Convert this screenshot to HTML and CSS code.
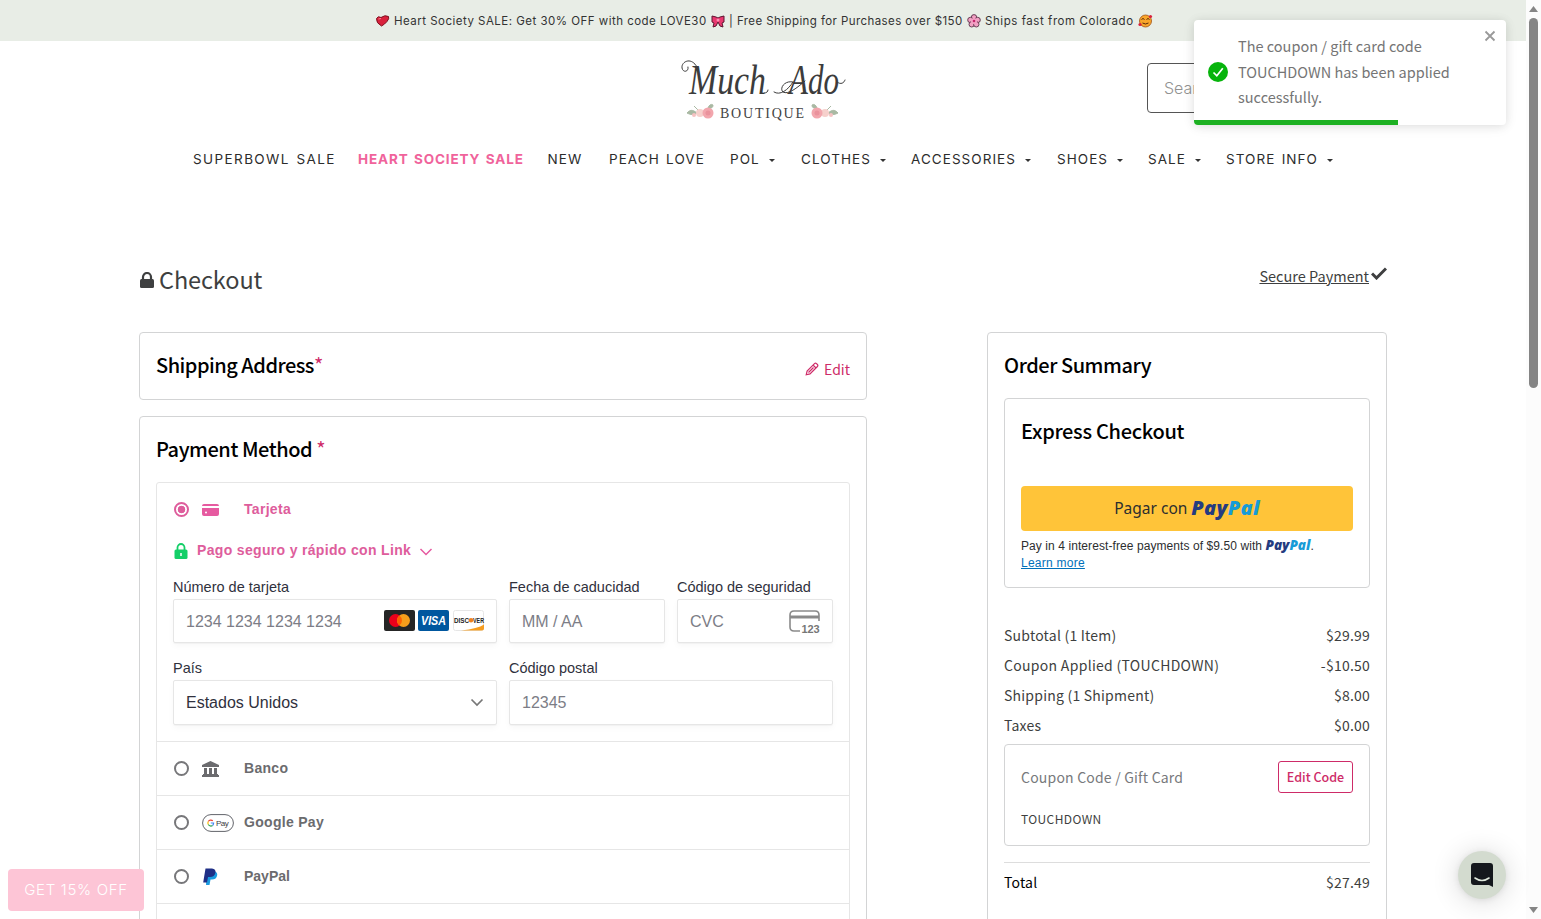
FILE: index.html
```
<!DOCTYPE html>
<html lang="en">
<head>
  <meta charset="UTF-8">
  <title>Checkout - Much Ado Boutique</title>
  <link rel="stylesheet" href="styles.css">
</head>
<body>
  <div class="page">
    <div class="announcement">
      <svg width="15" height="14" viewBox="0 0 15 14"><path d="M1.500 4.500Q3 1.500 6 3.500q4-3 7.500-1 1 2-1.500 5-2.500 3-5.500 4.500Q1 9 1.500 4.500z" fill="#d9213c" stroke="#7d1020"/><path d="M3.500 5l2.500-.500" stroke="#ff8594"/></svg>
      <span class="msg-sale">Heart Society SALE: Get 30% OFF with code LOVE30</span>
      <svg width="14" height="14" viewBox="0 0 14 14"><path d="M1 2l4 1 2 1 2-1 4-1v6l-2 1 1 4-3-1-2-4-2 4-3 1 1-4-2-1z" fill="#e8386f" stroke="#5d1530"/><circle cx="7" cy="6" r="1.500" fill="#ff8fb4"/></svg>
      <span class="msg-ship">| Free Shipping for Purchases over $150</span>
      <svg width="14" height="14" viewBox="0 0 14 14"><g fill="#f3a0c4" stroke="#5b3349" stroke-width=".9"><circle cx="7" cy="3.300" r="2.700"/><circle cx="3.400" cy="6" r="2.700"/><circle cx="10.600" cy="6" r="2.700"/><circle cx="4.700" cy="10.300" r="2.700"/><circle cx="9.300" cy="10.300" r="2.700"/></g><circle cx="7" cy="7" r="3" fill="#f3a0c4"/><circle cx="7" cy="7" r="1.300" fill="#c2256b"/></svg>
      <span class="msg-fast">Ships fast from Colorado</span>
      <svg width="15" height="14" viewBox="0 0 15 14"><circle cx="7.500" cy="7" r="6" fill="#f9a62b" stroke="#a05010" stroke-width=".8"/><path d="M3.500 5.500l1.500-1 1.500 1M8.500 5.500l1.500-1 1.500 1M4.500 9q3 2 6 0" fill="none" stroke="#57270b"/><circle cx="12.500" cy="2.500" r="1.600" fill="#d9213c"/><circle cx="2" cy="10.500" r="1.600" fill="#d9213c"/></svg>
    </div>

    <header class="header">
      <div class="brand-row">
        <svg class="logo" width="166" height="78" viewBox="0 -10 166 78">
          <g class="logo-script">
            <text x="9" y="38" textLength="77" lengthAdjust="spacingAndGlyphs">Much</text>
            <text x="109" y="38" textLength="50" lengthAdjust="spacingAndGlyphs">Ado</text>
          </g>
          <g fill="none" stroke="#3c3c3c" stroke-width="1" stroke-linecap="round">
            <path d="M17 11C11 0 1 6 2 12c1 5 7 4 6-1"/>
            <path d="M84 37q4 0 4-3"/>
            <path d="M94 36c6 4 14-2 19-10M113 26c-8-2-14 6-10 10 5 3 14-4 22-11"/>
            <path d="M157 26c4 3 7 1 8-2"/>
          </g>
          <text class="logo-sub" x="40" y="61.500" textLength="84">BOUTIQUE</text>
          <g id="flowers">
            <path d="M17 57c-5-4-7-3-10 0 4 2 7 2 10 0M28 52q2-5 5-3 0 4-5 3M18 54l-4-4" fill="#a9b9a3" stroke="#a9b9a3"/>
            <circle cx="20" cy="57" r="4" fill="#f6d0cc"/>
            <circle cx="28" cy="57" r="5.500" fill="#f2a6ad"/>
            <circle cx="28" cy="57" r="2.500" fill="#ea929c"/>
            <circle cx="14" cy="59" r="2" fill="#f6c2c2"/>
          </g>
          <use href="#flowers" transform="translate(165 0) scale(-1 1)"/>
        </svg>
        <div class="search">Search</div>
      </div>
      <nav class="nav">
        <a class="first">SUPERBOWL SALE</a>
        <a class="active">HEART SOCIETY SALE</a>
        <a>NEW</a>
        <a>PEACH LOVE</a>
        <a class="drop">POL</a>
        <a class="drop">CLOTHES</a>
        <a class="drop">ACCESSORIES</a>
        <a class="drop">SHOES</a>
        <a class="drop">SALE</a>
        <a class="drop">STORE INFO</a>
      </nav>
    </header>

    <main class="checkout">
      <div class="title-row">
        <h1>
          <svg width="14" height="16" viewBox="0 0 14 16"><path d="M3 8V5a4 4 0 018 0v3" fill="none" stroke="#3e3f40" stroke-width="2.200"/><rect y="7" width="14" height="9" rx="1.500" fill="#3e3f40"/></svg>
          Checkout
        </h1>
        <a class="secure"><span>Secure Payment</span><svg width="16" height="13" viewBox="0 0 16 13"><path d="M1 6.500l4.500 4.500L15 1.500" fill="none" stroke="#3e3f40" stroke-width="3"/></svg></a>
      </div>

      <div class="columns">
        <div class="left">
          <section class="card shipping">
            <h2>Shipping Address<i>*</i></h2>
            <a class="edit">
              <svg width="14" height="14" viewBox="0 0 14 14" fill="none" stroke="#ce2b68" stroke-width="1.200"><path d="M1.200 12.800l.9-3.800L9.500 1.600q1-.9 2 0l.9.9q.9 1 0 2L5 11.900zM8 3l3 3M3.500 10.500l5-5"/></svg>
              Edit
            </a>
          </section>

          <section class="card payment">
            <h2>Payment Method <i>*</i></h2>
            <div class="methods">
              <div class="method selected">
                <span class="radio"></span>
                <svg class="method-icon" width="17" height="14" viewBox="0 0 17 14"><path d="M2 1h13q2 0 2 2H0q0-2 2-2zM0 5h17v6q0 2-2 2H2q-2 0-2-2z" fill="#e65aa0"/><circle cx="4" cy="9.500" r="1" fill="#fff"/></svg>
                <span>Tarjeta</span>
              </div>
              <div class="link-row">
                <svg width="14" height="16" viewBox="0 0 14 16"><path d="M3.500 8V4.500a3.500 3.500 0 017 0V8" fill="none" stroke="#14cf68" stroke-width="1.800"/><rect x=".5" y="6.500" width="13" height="9.500" rx="1.500" fill="#14cf68"/><path d="M7 10v3" stroke="#fff" stroke-width="1.500"/></svg>
                <span>Pago seguro y rápido con Link</span>
                <svg width="14" height="8" viewBox="0 0 14 8"><path d="M1.500 1L7 6.500 12.500 1" fill="none" stroke="#e65aa0" stroke-width="1.500"/></svg>
              </div>
              <div class="fields">
                <div class="field wide">
                  <label>Número de tarjeta</label>
                  <div class="input">
                    <span>1234 1234 1234 1234</span>
                    <svg class="brands" width="101" height="21" viewBox="0 0 101 21">
                      <rect width="31" height="21" rx="2" fill="#252525"/>
                      <circle cx="11.500" cy="10.500" r="6.500" fill="#eb001b"/>
                      <circle cx="19.500" cy="10.500" r="6.500" fill="#f79e1b"/>
                      <path d="M15.500 5.400a6.500 6.500 0 010 10.200 6.500 6.500 0 010-10.200" fill="#ff5f00"/>
                      <rect x="34" width="31" height="21" rx="2" fill="#00579f"/>
                      <text class="visa" x="37" y="14.500" textLength="25" lengthAdjust="spacingAndGlyphs">VISA</text>
                      <rect x="69.500" y=".5" width="30" height="20" rx="2" fill="#fff" stroke="#e6e6e6"/>
                      <path d="M77 20.500q17-2 23-6v4q0 2-2 2z" fill="#f59d20"/>
                      <text class="discover" x="70" y="12.500" textLength="15" lengthAdjust="spacingAndGlyphs">DISC</text>
                      <circle cx="87" cy="10.200" r="2.300" fill="#ef8120"/>
                      <text class="discover" x="89" y="12.500" textLength="11" lengthAdjust="spacingAndGlyphs">VER</text>
                    </svg>
                  </div>
                </div>
                <div class="field">
                  <label>Fecha de caducidad</label>
                  <div class="input">MM / AA</div>
                </div>
                <div class="field">
                  <label>Código de seguridad</label>
                  <div class="input">
                    <span>CVC</span>
                    <svg class="cvc" width="32" height="24" viewBox="0 0 32 24"><path d="M11 21H5q-4 0-4-4V5q0-4 4-4h21q4 0 4 4v6" fill="none" stroke="#8a8a8a" stroke-width="1.600"/><path d="M1 7h29" stroke="#8a8a8a" stroke-width="3"/><text x="12.500" y="22.500" textLength="18">123</text></svg>
                  </div>
                </div>
                <div class="field wide">
                  <label>País</label>
                  <div class="input select">
                    <span>Estados Unidos</span>
                    <svg width="14" height="9" viewBox="0 0 14 9"><path d="M1.500 1.500L7 7l5.500-5.500" fill="none" stroke="#777" stroke-width="1.700"/></svg>
                  </div>
                </div>
                <div class="field wide">
                  <label>Código postal</label>
                  <div class="input postal">12345</div>
                </div>
              </div>
              <div class="method">
                <span class="radio"></span>
                <svg class="method-icon" width="17" height="16" viewBox="0 0 17 16"><path d="M8.500 0L17 4v2H0V4zM2 7h3v6H2zM7 7h3v6H7zM12 7h3v6h-3zM1 13h15v1h1v2H0v-2h1z" fill="#6b6b6e"/></svg>
                <span>Banco</span>
              </div>
              <div class="method">
                <span class="radio"></span>
                <svg class="method-icon" width="32" height="18" viewBox="0 0 32 18"><rect x=".6" y=".6" width="30.800" height="16.800" rx="8.400" fill="#fff" stroke="#62646a"/><path d="M10.800 6.800A3 3 0 006.300 7.500" fill="none" stroke="#ea4335" stroke-width="1.200"/><path d="M6.300 7.500a3 3 0 000 3" fill="none" stroke="#fbbc04" stroke-width="1.200"/><path d="M6.300 10.500a3 3 0 004.300 1" fill="none" stroke="#34a853" stroke-width="1.200"/><path d="M10.600 11.500q1-1 1-2.500H8.800" fill="none" stroke="#4285f4" stroke-width="1.200"/><text class="gpay" x="14" y="12" textLength="13">Pay</text></svg>
                <span>Google Pay</span>
              </div>
              <div class="method paypal">
                <span class="radio"></span>
                <svg class="method-icon" width="17" height="17" viewBox="0 0 17 17"><path d="M5 3.500h8q3 1 2 4.500-1 3.500-5 3.500H8.500L7.500 17H4z" fill="#1a9be0"/><path d="M3.500.5H10q4 .5 3.500 4Q12.500 9 8 9H6l-1 5.500H1.200z" fill="#1f2f86"/></svg>
                <span>PayPal</span>
              </div>
              <div class="method"></div>
            </div>
          </section>
        </div>

        <aside class="card summary">
          <h2>Order Summary</h2>
          <div class="box express">
            <h2>Express Checkout</h2>
            <div class="paypal-button"><span>Pagar con</span><b class="pp">Pay<em>Pal</em></b></div>
            <p>Pay in 4 interest-free payments of $9.50 with <b class="pp">Pay<em>Pal</em></b>.<br><a>Learn more</a></p>
          </div>
          <dl class="totals">
            <div><dt>Subtotal (1 Item)</dt><dd>$29.99</dd></div>
            <div><dt class="coupon-line">Coupon Applied (TOUCHDOWN)</dt><dd>-$10.50</dd></div>
            <div><dt>Shipping (1 Shipment)</dt><dd>$8.00</dd></div>
            <div><dt>Taxes</dt><dd>$0.00</dd></div>
          </dl>
          <div class="box coupon">
            <div class="coupon-row">
              <span>Coupon Code / Gift Card</span>
              <button>Edit Code</button>
            </div>
            <div class="coupon-code">TOUCHDOWN</div>
          </div>
          <div class="total-row"><strong>Total</strong><span>$27.49</span></div>
        </aside>
      </div>
    </main>
  </div>

  <div class="scrollbar">
    <svg width="9" height="6" viewBox="0 0 9 6"><path d="M0 6l4.500-6L9 6z" fill="#858585"/></svg>
    <div class="thumb"></div>
    <svg width="9" height="6" viewBox="0 0 9 6"><path d="M0 0l4.500 6L9 0z" fill="#858585"/></svg>
  </div>

  <div class="toast">
    <svg width="20" height="20" viewBox="0 0 20 20"><circle cx="10" cy="10" r="10" fill="#07b40c"/><path d="M5.500 10.500l3.300 3.300 6-7.500" fill="none" stroke="#fff" stroke-width="1.700"/></svg>
    <p>The coupon / gift card code<br>TOUCHDOWN has been applied<br>successfully.</p>
    <svg class="close" width="12" height="12" viewBox="0 0 12 12"><path d="M1.500 1.500l9 9M10.500 1.500l-9 9" stroke="#999" stroke-width="1.800"/></svg>
    <div class="progress"></div>
  </div>

  <div class="promo">GET 15% OFF</div>

  <div class="chat">
    <svg width="22" height="24" viewBox="0 0 22 24"><path d="M3 0h16q3 0 3 3v21l-4-2H3q-3 0-3-3V3q0-3 3-3z" fill="#15181d"/><path d="M4 15q7 5 14 0" fill="none" stroke="#dfe8dc" stroke-width="1.600" stroke-linecap="round"/></svg>
  </div>
</body>
</html>
```

FILE: styles.css
```
* {
  box-sizing: border-box;
  margin: 0;
  padding: 0;
}

body {
  width: 1541px;
  height: 919px;
  overflow: hidden;
  display: flex;
  background: #fff;
  color: #3e3f40;
  font-family: "Noto Sans CJK JP", "Noto Sans", sans-serif;
  font-size: 14px;
}

svg {
  display: block;
  flex: none;
}

.page {
  width: 1526px;
  height: 919px;
  overflow: hidden;
}

.announcement {
  height: 41px;
  display: flex;
  justify-content: center;
  align-items: center;
  gap: 4px;
  padding-left: 2px;
  background: #e8ede6;
  color: #333;
  font: 11.500px Inter, sans-serif;
  white-space: nowrap;
}

.msg-sale {
  width: 313px;
  letter-spacing: 0.48px;
}

.msg-ship {
  width: 234px;
  letter-spacing: 0.42px;
}

.msg-fast {
  width: 149px;
  letter-spacing: 0.56px;
}

/* header */
.brand-row {
  position: relative;
  display: flex;
  justify-content: center;
  padding-top: 5px;
  height: 107px;
}

.logo-script {
  font: italic 43px "Liberation Serif", serif;
  fill: #3c3c3c;
}

.logo-sub {
  font: 14px "Liberation Serif", serif;
  fill: #444;
}

.search {
  position: absolute;
  left: 1147px;
  top: 22px;
  width: 240px;
  height: 50px;
  padding-left: 16px;
  border: 1px solid #555;
  border-radius: 4px;
  color: #929292;
  font: 300 16px/48px Inter, sans-serif;
}

.nav {
  display: grid;
  grid-template-columns: 165px 189.500px 61.500px 121px 71px 110px 146px 91px 78px 120px;
  padding-left: 193px;
  font: 13.500px/22px Inter, sans-serif;
  letter-spacing: 1.05px;
  word-spacing: 1.500px;
  color: #2c2c2c;
  white-space: nowrap;
}

.nav .first {
  letter-spacing: 1.4px;
}

.nav .active {
  color: #f0639b;
  font-weight: 700;
  letter-spacing: 0.85px;
}

.nav .drop::after {
  content: "";
  display: inline-block;
  margin-left: 9px;
  vertical-align: 2px;
  border: 3.500px solid transparent;
  border-top-color: #333;
  border-bottom: 0;
}

/* checkout */
.checkout {
  width: 1248px;
  margin: 90px 0 0 139px;
}

.title-row {
  display: flex;
  justify-content: space-between;
  height: 72px;
}

h1 {
  display: flex;
  align-items: center;
  gap: 5px;
  height: 38px;
  padding-left: 1px;
  font-size: 23.500px;
  font-weight: 400;
  letter-spacing: -0.1px;
}

h1 svg {
  margin-top: 2px;
}

.secure {
  display: flex;
  align-items: center;
  gap: 2px;
  height: 30px;
  font-size: 14.500px;
}

.secure span {
  text-decoration: underline;
}

.secure svg {
  margin-top: -4px;
}

.columns {
  display: flex;
  justify-content: space-between;
  align-items: flex-start;
}

.left {
  width: 728px;
}

.card,
.box {
  border: 1px solid #d3d4d5;
  border-radius: 4px;
}

.card {
  padding: 16px;
}

h2 {
  padding-bottom: 2px;
  color: #000;
  font-size: 20px;
  font-weight: 500;
  line-height: 32px;
  letter-spacing: -0.45px;
}

h2 i {
  color: #ce2b68;
  font-style: normal;
  font-weight: 400;
}

.shipping {
  height: 68px;
  margin-bottom: 16px;
  display: flex;
  justify-content: space-between;
}

.shipping h2 {
  letter-spacing: -0.5px;
}

.edit {
  display: flex;
  gap: 5px;
  align-items: center;
  height: 40px;
  color: #ce2b68;
}

.payment {
  height: 600px;
}

.methods {
  margin-top: 15px;
  border: 1px solid #e6e6e6;
  border-radius: 3px;
  font-family: "Liberation Sans", Arial, sans-serif;
}

.method {
  display: flex;
  align-items: center;
  height: 54px;
  padding-left: 17px;
  border-top: 1px solid #e6e6e6;
  color: #6b6b6e;
  font-size: 14px;
  font-weight: 700;
  letter-spacing: 0.3px;
}

.paypal {
  letter-spacing: 0;
}

.selected {
  height: 53px;
  border: 0;
  color: #de5d9c;
}

.radio {
  width: 15px;
  height: 15px;
  border: 2px solid #77777a;
  border-radius: 50%;
}

.selected .radio {
  border-color: #de5d9c;
  background: radial-gradient(circle, #de5d9c 3.500px, #fff 4.100px);
}

.method-icon {
  margin-left: 13px;
}

.method > span:last-child {
  position: absolute;
  margin: 0 0 2px 70px;
}

.link-row {
  display: flex;
  align-items: center;
  gap: 8px;
  height: 20px;
  margin: 4px 0 0 17px;
  color: #de5d9c;
  font-size: 14px;
  font-weight: 700;
  letter-spacing: 0.33px;
}

.link-row svg:last-child {
  margin-top: 3px;
}

.link-row svg:first-child {
  margin: 1px 1px 0 0;
}

.fields {
  display: grid;
  grid-template-columns: repeat(4, 156px);
  gap: 16px 12px;
  padding: 18px 16px 16px;
}

.wide {
  grid-column: span 2;
}

.field label {
  display: block;
  height: 21px;
  color: #30313d;
  font-size: 14.500px;
  line-height: 18px;
}

.input {
  display: flex;
  align-items: center;
  justify-content: space-between;
  height: 44px;
  padding: 2px 12px 0;
  border: 1px solid #e6e6e6;
  border-radius: 2px;
  box-shadow: 0 1px 1px rgba(0, 0, 0, 0.03), 0 3px 6px rgba(0, 0, 0, 0.03);
  color: #7c7d86;
  font-size: 16px;
}

.select,
.postal {
  height: 45px;
  padding-top: 0;
}

.select {
  color: #30313d;
}

.brands {
  margin: -3px -1px 0 0;
}

.cvc {
  margin-right: -1px;
}

.visa {
  font: italic bold 12px "Liberation Sans", sans-serif;
  fill: #fff;
}

.discover {
  font: bold 6.500px "Liberation Sans", sans-serif;
  fill: #222;
}

.cvc text {
  font: bold 11px "Liberation Sans", sans-serif;
  fill: #777;
}

.gpay {
  font: 8px "Liberation Sans", sans-serif;
  fill: #3c4043;
}

/* order summary */
.summary {
  width: 400px;
  height: 700px;
}

.express {
  height: 190px;
  margin-top: 15px;
  padding: 16px;
}

.express h2 {
  letter-spacing: -0.3px;
}

.paypal-button {
  display: flex;
  justify-content: center;
  align-items: center;
  gap: 4px;
  height: 45px;
  margin-top: 37px;
  padding-bottom: 2px;
  background: #ffc439;
  border-radius: 4px;
  color: #2c2e2f;
  font: 15.500px "Noto Sans", sans-serif;
}

.pp {
  color: #253b80;
  font: italic 800 20px "Open Sans", sans-serif;
  letter-spacing: 0.3px;
}

.pp em {
  color: #179bd7;
}

.express p {
  margin-top: 7px;
  color: #2c2e2f;
  font: 12px/17px "Liberation Sans", Arial, sans-serif;
  letter-spacing: 0.08px;
  white-space: nowrap;
}

.express p .pp {
  font-size: 13.500px;
  line-height: 12px;
  letter-spacing: 0;
}

.express p a {
  color: #0070ba;
  letter-spacing: 0.25px;
  text-decoration: underline;
}

.totals {
  margin-top: 32px;
  letter-spacing: 0.22px;
}

.totals div {
  display: flex;
  justify-content: space-between;
  height: 30px;
  line-height: 30px;
}

.coupon-line {
  letter-spacing: 0.3px;
}

.coupon {
  height: 102px;
  margin-top: 4px;
  padding: 16px;
}

.coupon-row {
  display: flex;
  align-items: center;
  justify-content: space-between;
  color: #77797c;
  letter-spacing: 0.2px;
}

.coupon button {
  width: 75px;
  height: 32px;
  padding-bottom: 2px;
  border: 1px solid #ce2b68;
  border-radius: 3px;
  background: #fff;
  color: #ce2b68;
  font: 500 12.500px "Noto Sans CJK JP", sans-serif;
}

.coupon-code {
  margin-top: 16px;
  font-size: 12px;
  line-height: 20px;
  letter-spacing: 0.4px;
}

.total-row {
  display: flex;
  justify-content: space-between;
  margin-top: 16px;
  border-top: 1px solid #ddd;
  line-height: 38px;
  letter-spacing: 0.2px;
}

.total-row strong {
  color: #000;
  font-weight: 400;
}

/* window scrollbar */
.scrollbar {
  width: 15px;
  height: 919px;
  display: flex;
  flex-direction: column;
  align-items: center;
  padding: 6px 0;
  background: #fcfcfc;
}

.thumb {
  width: 9px;
  height: 370px;
  margin: 6px 0 auto;
  border-radius: 5px;
  background: #858585;
}

/* floating items */
.toast {
  position: absolute;
  left: 1194px;
  top: 20px;
  width: 312px;
  height: 105px;
  display: flex;
  align-items: center;
  gap: 10px;
  padding: 0 0 2px 14px;
  overflow: hidden;
  border-radius: 4px;
  background: #fff;
  box-shadow: 0 1px 10px rgba(0, 0, 0, 0.1), 0 2px 15px rgba(0, 0, 0, 0.05);
  color: #757575;
  font-size: 14.500px;
  line-height: 25.600px;
}

.close {
  position: absolute;
  right: 10px;
  top: 10px;
}

.progress {
  position: absolute;
  left: 0;
  bottom: 0;
  width: 204px;
  height: 5px;
  background: #1eb123;
}

.promo {
  position: absolute;
  left: 8px;
  top: 869px;
  width: 136px;
  height: 42px;
  border-radius: 4px;
  background: #fdc5d6;
  color: #fff;
  font: 300 15px/42px Inter, sans-serif;
  letter-spacing: 0.7px;
  text-align: center;
}

.chat {
  position: absolute;
  left: 1458px;
  top: 851px;
  width: 48px;
  height: 48px;
  display: flex;
  justify-content: center;
  align-items: center;
  border-radius: 50%;
  background: #d3dbcf;
  box-shadow: 0 1px 6px rgba(0, 0, 0, 0.08), 0 2px 28px rgba(0, 0, 0, 0.16);
}
```
